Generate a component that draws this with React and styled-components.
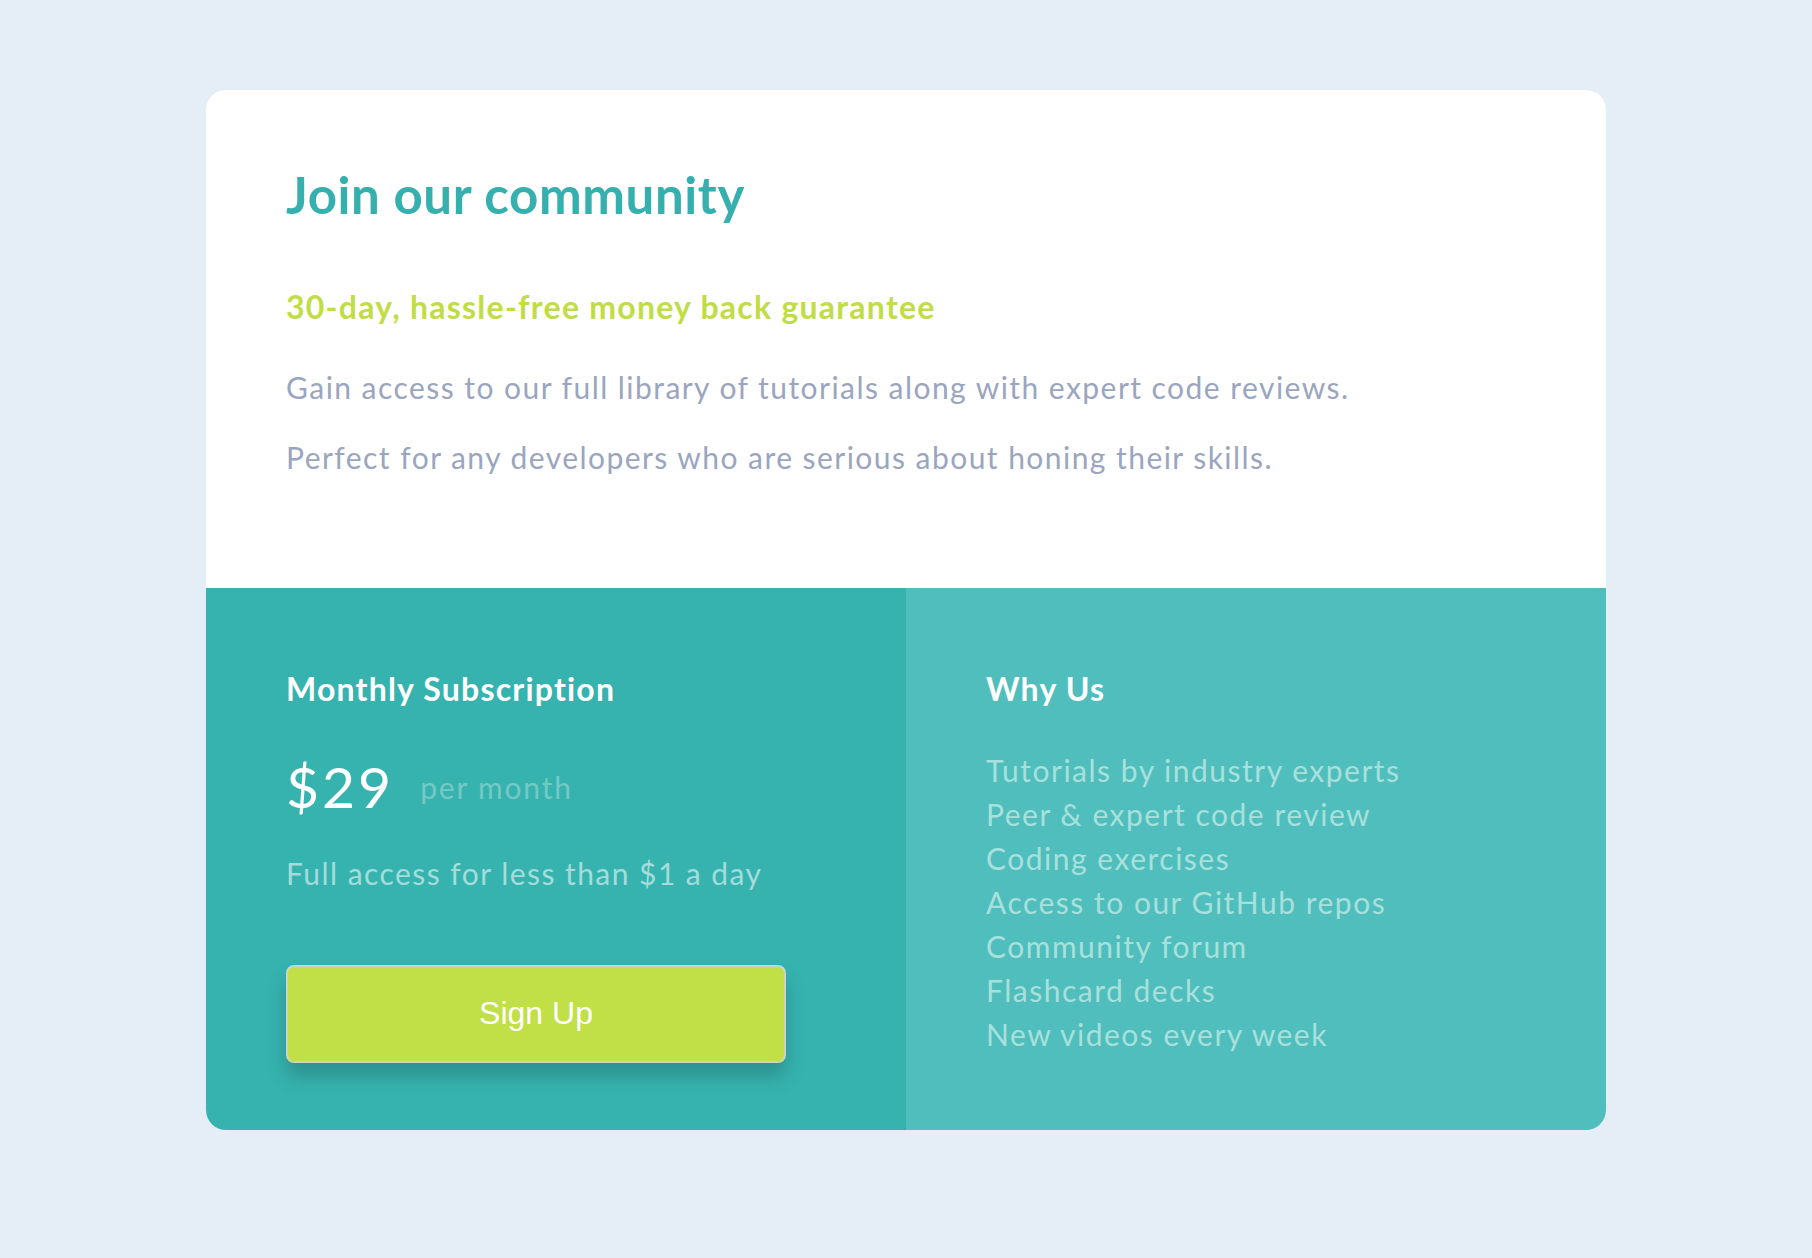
import React from 'react'
import styled, { createGlobalStyle } from 'styled-components'

const GlobalStyle = createGlobalStyle`
  * {
    box-sizing: border-box;
    margin: 0;
    padding: 0;
  }
  body {
    background-color: #e5eef6;
    font-family: 'Lato', 'Liberation Sans', sans-serif;
  }
`

const features = [
  'Tutorials by industry experts',
  'Peer & expert code review',
  'Coding exercises',
  'Access to our GitHub repos',
  'Community forum',
  'Flashcard decks',
  'New videos every week',
]

function App() {
  return (
    <>
      <GlobalStyle />
      <Page>
        <Card>
          <Intro>
            <Title>Join our community</Title>
            <Guarantee>30-day, hassle-free money back guarantee</Guarantee>
            <Text>Gain access to our full library of tutorials along with expert code reviews.</Text>
            <Text $gap={34}>Perfect for any developers who are serious about honing their skills.</Text>
          </Intro>
          <Bottom>
            <Subscription>
              <ColumnTitle>Monthly Subscription</ColumnTitle>
              <PriceRow>
                <Price>$29</Price>
                <Period>per month</Period>
              </PriceRow>
              <Note>Full access for less than $1 a day</Note>
              <SignUp type="button">Sign Up</SignUp>
            </Subscription>
            <WhyUs>
              <ColumnTitle>Why Us</ColumnTitle>
              <List>
                {features.map((item) => (
                  <Item key={item}>{item}</Item>
                ))}
              </List>
            </WhyUs>
          </Bottom>
        </Card>
      </Page>
    </>
  )
}

export default App

const Page = styled.main`
  display: flex;
  justify-content: center;
  padding: 90px 0 128px;
`

const Card = styled.section`
  width: 1400px;
  height: 1040px;
  background-color: #fff;
  border-radius: 20px;
  overflow: hidden;
  display: flex;
  flex-direction: column;
`

const Intro = styled.div`
  height: 498px;
  padding: 74px 80px 0;
`

const Title = styled.h1`
  font-size: 51px;
  line-height: 1.2;
  font-weight: 700;
  color: #35b0ae;
  letter-spacing: 0.6px;
`

const Guarantee = styled.h2`
  margin-top: 63px;
  font-size: 32px;
  line-height: 1.2;
  font-weight: 700;
  color: #c1dd45;
  letter-spacing: 1.25px;
`

const Text = styled.p`
  margin-top: ${(p) => p.$gap || 42}px;
  font-size: 30px;
  line-height: 1.2;
  color: #9aa5bf;
  letter-spacing: 1.45px;
`

const Bottom = styled.div`
  flex: 1;
  display: grid;
  grid-template-columns: 1fr 1fr;
`

const Column = styled.div`
  padding: 82px 80px 0;
  color: #fff;
`

const Subscription = styled(Column)`
  background-color: #36b3af;
`

const WhyUs = styled(Column)`
  background-color: #4fbebc;
`

const ColumnTitle = styled.h3`
  font-size: 32px;
  line-height: 1.2;
  font-weight: 700;
  color: #fff;
  letter-spacing: 1.2px;
`

const PriceRow = styled.div`
  margin-top: 44px;
  display: flex;
  align-items: center;
  gap: 26px;
`

const Price = styled.span`
  font-size: 57px;
  line-height: 1.2;
  color: #fff;
  letter-spacing: 3px;
`

const Period = styled.span`
  font-size: 30px;
  line-height: 1.2;
  color: #74c9c5;
  letter-spacing: 1.8px;
`

const Note = styled.p`
  margin-top: 34px;
  font-size: 30px;
  line-height: 1.2;
  color: #a5dcd9;
  letter-spacing: 1.45px;
`

const SignUp = styled.button`
  display: block;
  margin-top: 74px;
  width: 500px;
  height: 98px;
  border: 2px solid #cfd3c4;
  border-radius: 8px;
  background-color: #c1df47;
  color: #fff;
  font-family: 'Liberation Sans', Arial, sans-serif;
  font-size: 32px;
  cursor: pointer;
  box-shadow: 0 14px 18px rgba(30, 90, 90, 0.35);
`

const List = styled.ul`
  margin-top: 40px;
  list-style: none;
`

const Item = styled.li`
  font-size: 30px;
  line-height: 44px;
  color: #a8e0dc;
  letter-spacing: 1.5px;
`
